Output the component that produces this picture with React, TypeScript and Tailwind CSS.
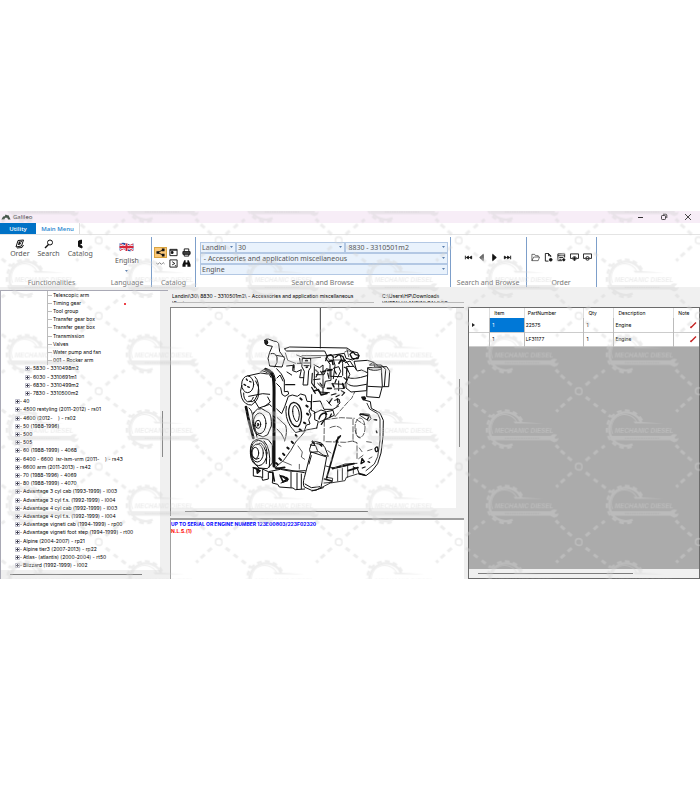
import type { ReactNode } from "react";

interface TreeItem {
  label: string;
  level: 1 | 2 | 3;
}

interface Part {
  item: string;
  partNumber: string;
  qty: string;
  description: string;
}

const leaf = (label: string): TreeItem => ({ label, level: 3 });
const model = (label: string): TreeItem => ({ label, level: 2 });
const series = (label: string): TreeItem => ({ label, level: 1 });

const tree: TreeItem[] = [
  leaf("Telescopic arm"),
  leaf("Timing gear"),
  leaf("Tool group"),
  leaf("Transfer gear box"),
  leaf("Transfer gear box"),
  leaf("Transmission"),
  leaf("Valves"),
  leaf("Water pump and fan"),
  leaf("001 - Rocker arm"),
  model("5830 - 3310498m2"),
  model("6030 - 3310691m1"),
  model("6830 - 3310499m2"),
  model("7830 - 3310500m2"),
  series("40"),
  series("4500 restyling (2011-2012) - rs01"),
  series("4600 (2012-    ) - rs02"),
  series("50 (1988-1996)"),
  series("500"),
  series("505"),
  series("60 (1988-1999) - 4068"),
  series("6400 - 6600  isr-ism-vrm (2011-    ) - rs43"),
  series("6600 arm (2011-2013) - rs42"),
  series("70 (1988-1996) - 4069"),
  series("80 (1988-1999) - 4070"),
  series("Advantage 3 cyl cab (1993-1999) - l003"),
  series("Advantage 3 cyl f.s. (1992-1999) - l004"),
  series("Advantage 4 cyl cab (1992-1999) - l003"),
  series("Advantage 4 cyl f.s. (1992-1999) - l004"),
  series("Advantage vigneti cab (1994-1999) - rp00"),
  series("Advantage vigneti foot step (1994-1999) - rt00"),
  series("Alpine (2004-2007) - rp21"),
  series("Alpine tier3 (2007-2013) - rp22"),
  series("Atlas- (atlantis) (2000-2004) - rt50"),
  series("Blizzard (1992-1999) - l002"),
];

const parts: Part[] = [
  { item: "1", partNumber: "22575", qty: "1", description: "Engine" },
  { item: "1", partNumber: "LF31177", qty: "1", description: "Engine" },
];

function Watermark() {
  return (
    <svg className="pointer-events-none absolute inset-0 h-full w-full opacity-40" aria-hidden="true">
      <defs>
        <pattern id="mark" width="120" height="75.4" patternUnits="userSpaceOnUse" patternTransform="translate(-21.3 29.4)">
          <g fill="none" stroke="#d4d4d4" strokeWidth="1.6">
            <path d="M0 3.3H1.5Q3.3 3.3 3.3 0M116.7 0Q116.7 3.3 120 3.3M0 72.1Q3.3 72.1 3.3 75.4M116.7 75.4Q116.7 72.1 120 72.1" />
          </g>
          <g fill="none" stroke="#d4d4d4" strokeWidth="3">
            <path d="M7 6l4 3M15 12.5l4 3M23 18.5l4 3M30 24l2 1.5" />
            <path d="M113 6l-4 3.5M106 12.5l-4 3.5M99.500 18.500l-2 2" />
            <path d="M7 69.400l4 -3.500M15 62.900l4 -3.500M23 56.900l3 -2.500" />
            <path d="M113 69.400l-4 -3.500M106 62.900l-4 -3.500M100 56.900l-3 -3" />
          </g>
          <g transform="translate(1.300 -20.800) scale(.3333)">
            <path d="M184 157A50 50 0 1 0 158 222" fill="none" stroke="#d4d4d4" strokeWidth="7" />
            <path d="M186 150A56 56 0 1 0 160 227" fill="none" stroke="#d4d4d4" strokeWidth="7" strokeDasharray="14 10" />
            <path d="M170 155A40 40 0 0 0 98 190" fill="none" stroke="#d4d4d4" strokeWidth="3" />
            <path d="M160 153L252 159H165ZM92 196H272Q277 188 292 193L284 201L286 205L296 203Q294 214 282 216L270 210H92Z" fill="#d4d4d4" />
            <text x="104" y="186" fontSize="19" fontWeight="700" fontStyle="italic" fill="#d4d4d4" fontFamily="'Liberation Sans', sans-serif">
              MECHANIC DIESEL
            </text>
            <path d="M134 203H240" stroke="#b8b8b8" strokeWidth="3" strokeDasharray="5 2" />
          </g>
        </pattern>
      </defs>
      <rect width="100%" height="100%" fill="url(#mark)" />
    </svg>
  );
}

function TitleBar() {
  return (
    <header className="flex h-3 items-center bg-[#f7edf7] pl-px text-[#333]">
      <svg viewBox="0 0 24 16" className="h-2 w-2.5" fill="#47564b">
        <path d="M1 14L5 7L9 6L11 2L15 4L18 4L23 14L17 14L15 10L10 10L8 14Z" />
      </svg>
      <h1 className="ml-0.5 text-[6px] leading-3">Galileo</h1>
      <div className="ml-auto flex items-center gap-4 pr-2">
        <button aria-label="Minimize" className="h-2 w-2">
          <svg viewBox="0 0 8 8" className="h-2 w-2" fill="none" stroke="#333">
            <path d="M2 4.500H7" />
          </svg>
        </button>
        <button aria-label="Restore" className="h-2 w-2">
          <svg viewBox="0 0 8 8" className="h-2 w-2" fill="none" stroke="#333" strokeWidth=".9">
            <rect x="1.500" y="2.500" width="4" height="4" rx=".8" />
            <path d="M3 1.200H5.800Q6.800 1.200 6.800 2.200V5" />
          </svg>
        </button>
        <button aria-label="Close" className="h-2 w-2">
          <svg viewBox="0 0 8 8" className="h-2 w-2" fill="none" stroke="#333" strokeWidth=".9">
            <path d="M1 1L7 7M7 1L1 7" />
          </svg>
        </button>
      </div>
    </header>
  );
}

function RibbonGroup({ label, className, children }: { label: string; className: string; children: ReactNode }) {
  return (
    <section className={`flex flex-col ${className}`}>
      <div className="flex-1">{children}</div>
      <p className="text-center text-[7px] leading-2 whitespace-nowrap text-[#777]">{label}</p>
    </section>
  );
}

function ToolButton({ label, children }: { label: string; children: ReactNode }) {
  return (
    <button className="flex flex-col items-center">
      <svg viewBox="0 0 20 20" className="h-2.5 w-2.5" fill="none" stroke="#111" strokeWidth="2">
        {children}
      </svg>
      <span className="text-[7px] leading-2.5 text-[#555]">{label}</span>
    </button>
  );
}

function IconButton({ label, active = false, children }: { label: string; active?: boolean; children: ReactNode }) {
  return (
    <button
      aria-label={label}
      className={`flex h-[11px] w-[13px] items-center justify-center ${active ? "border border-[#d9a441] bg-[#fbc878]" : ""}`}
    >
      <svg viewBox="0 0 20 20" className="h-[9px] w-[9px]" fill="none" stroke="#111" strokeWidth="2">
        {children}
      </svg>
    </button>
  );
}

function Combo({ label, value, className }: { label: string; value: string; className: string }) {
  return (
    <div className={`relative h-[11px] border border-[#b3c8e4] bg-[#e9f2fc] ${className}`}>
      <select
        aria-label={label}
        className="block h-[9px] w-full appearance-none bg-transparent pl-px text-[7px] leading-[9px] text-[#555] outline-none"
      >
        <option>{value}</option>
      </select>
      <svg viewBox="0 0 6 4" className="absolute top-[3px] right-0.5 h-0.5 w-[3px]" fill="#5b7fae">
        <path d="M0 0H6L3 4Z" />
      </svg>
    </div>
  );
}

function Ribbon() {
  return (
    <div className="bg-white">
      <nav className="flex h-3 items-stretch border-b border-[#e4e4e4] font-['Open_Sans','Noto_Sans',sans-serif] text-[6px] leading-3">
        <button className="w-9 bg-[#0072c6] font-semibold text-white">Utility</button>
        <button className="w-11 border-r border-[#ddd] font-semibold text-[#2a86cf]">Main Menu</button>
      </nav>
      <div className="flex h-[52px] divide-x divide-[#7d9fca] pt-0.5">
        <div className="flex">
          <RibbonGroup label="Functionalities" className="w-[103px]">
            <div className="flex justify-center gap-2 pt-0.5">
              <ToolButton label="Order">
                <path d="M6 3L17 2L13 14L2 16ZM8 7L14 5M6 11L12 9M4 18L14 17L17 12" />
                <path d="M9 5L8 11" strokeWidth="3" />
              </ToolButton>
              <ToolButton label="Search">
                <circle cx="12" cy="7" r="5" />
                <path d="M9 11L2 18" strokeWidth="3" />
              </ToolButton>
              <ToolButton label="Catalog">
                <path d="M7 4L13 2V9L8 11L14 14V18L7 15Z" fill="#111" />
              </ToolButton>
            </div>
          </RibbonGroup>
          <RibbonGroup label="Language" className="w-12">
            <button className="mx-auto flex flex-col items-center pt-[5px]">
              <svg viewBox="0 0 30 20" className="h-[10px] w-[15px]">
                <path d="M1 3Q8 0 15 3T29 3V17Q22 20 15 17T1 17Z" fill="#294a9d" />
                <path d="M2 4L28 17M28 4L2 17" stroke="#fff" strokeWidth="4" />
                <path d="M2 4L28 17M28 4L2 17" stroke="#d5273b" strokeWidth="2" />
                <path d="M15 3V18M1 10H29" stroke="#fff" strokeWidth="6" />
                <path d="M15 3V18M1 10H29" stroke="#d5273b" strokeWidth="4" />
              </svg>
              <span className="pt-1 text-[7px] leading-2.5 text-[#555]">English</span>
              <svg viewBox="0 0 6 4" className="mt-1 h-0.5 w-[3px]" fill="#5b7fae">
                <path d="M0 0H6L3 4Z" />
              </svg>
            </button>
          </RibbonGroup>
        </div>
        <RibbonGroup label="Catalog" className="w-11">
          <div className="grid grid-cols-3 px-0.5 pt-[10px]">
            <IconButton label="Tree view" active>
              <path d="M4 10L16 4M4 10L16 16" />
              <path d="M1 7H7V13H1ZM13 1H19V7H13ZM13 13H19V19H13Z" fill="#111" stroke="none" />
            </IconButton>
            <IconButton label="Window">
              <path d="M2 3H18V17H2ZM2 5H18" />
              <path d="M5 8H9V12H5Z" fill="#111" />
            </IconButton>
            <IconButton label="Print">
              <path d="M5 8V2H15V8M5 13V18H15V13" />
              <path d="M2 8H18V14H2Z" fill="#444" />
            </IconButton>
            <IconButton label="Compare">
              <path d="M0 8L4 12L8 8L12 12L16 8L19 11" stroke="#777" strokeWidth="2" />
            </IconButton>
            <IconButton label="Preview">
              <path d="M2 2H18V18H2ZM7 6L13 10L7 13" />
              <path d="M13 15H16" />
            </IconButton>
            <IconButton label="Find">
              <path d="M5 3H8V8H12V3H15L19 12V17H12V12H8V17H1V12Z" fill="#111" stroke="none" />
            </IconButton>
          </div>
        </RibbonGroup>
        <RibbonGroup label="Search and Browse" className="min-w-0 flex-[255]">
          <div className="flex flex-col pt-[5px] pr-0.5 pl-1">
            <div className="flex">
              <Combo label="Brand" value="Landini" className="w-9" />
              <Combo label="Series" value="30" className="flex-1" />
              <Combo label="Model" value={"\u00a08830 - 3310501m2"} className="w-[103px]" />
            </div>
            <Combo label="Group" value={"\u00a0- Accessories and application miscellaneous"} className="w-full" />
            <Combo label="Table" value="Engine" className="w-full" />
          </div>
        </RibbonGroup>
        <RibbonGroup label="Search and Browse" className="w-[76px]">
          <div className="flex justify-center pt-[15px]">
            <IconButton label="First">
              <path d="M3 6V14M10 7L5 10L10 13ZM17 7L12 10L17 13Z" fill="#111" />
            </IconButton>
            <IconButton label="Previous">
              <path d="M14 3L6 10L14 17Z" fill="#777" stroke="#555" />
            </IconButton>
            <IconButton label="Next">
              <path d="M6 3L14 10L6 17Z" fill="#111" />
            </IconButton>
            <IconButton label="Last">
              <path d="M17 6V14M10 7L15 10L10 13ZM3 7L8 10L3 13Z" fill="#111" />
            </IconButton>
          </div>
        </RibbonGroup>
        <RibbonGroup label="Order" className="w-[70px]">
          <div className="flex justify-center pt-[15px]">
            <IconButton label="Open order">
              <path d="M2 17V3H8L10 6H16V9M2 17L6 9H19L16 17Z" strokeWidth="1.300" />
            </IconButton>
            <IconButton label="New order">
              <path d="M10 18H3V1H10L15 6V9M10 1V6H15" />
              <circle cx="15" cy="15" r="3" fill="#111" />
            </IconButton>
            <IconButton label="Edit list">
              <path d="M11 17H2V2H17V10M2 6H17M5 10H14M5 14H10" />
              <circle cx="15" cy="15" r="2.500" fill="#111" />
            </IconButton>
            <IconButton label="Add to order">
              <path d="M5 12H1V2H19V12H15M6 12H14" />
              <circle cx="10" cy="12" r="4" />
              <path d="M10 9V17" />
            </IconButton>
            <IconButton label="Remove from order">
              <path d="M5 12H1V2H19V12H15M6 12H14" />
              <circle cx="10" cy="12" r="4" />
            </IconButton>
          </div>
        </RibbonGroup>
        <div className="flex-[104]" />
      </div>
    </div>
  );
}

function TreeRow({ item }: { item: TreeItem }) {
  if (item.level === 3) {
    return (
      <li className="ml-[46px] flex flex-1 items-center border-l border-[#bbb]">
        <span className="mr-px w-1 border-t border-[#bbb]" />
        <span className="leading-none whitespace-pre">{item.label}</span>
      </li>
    );
  }
  return (
    <li className={`flex flex-1 items-center ${item.level === 2 ? "ml-6" : "ml-3.5"}`}>
      <button aria-label={`Expand ${item.label}`} className="h-[5px] w-[5px]">
        <svg viewBox="0 0 10 10" className="block h-[5px] w-[5px]" fill="#fff">
          <path d="M1 1H9V9H1Z" stroke="#aab" strokeWidth="1.500" />
          <path d="M2 5H8M5 2V8" stroke="#445" strokeWidth="2" />
        </svg>
      </button>
      <span className="mr-px w-0.5 border-t border-[#bbb]" />
      <span className="leading-none whitespace-pre">{item.label}</span>
    </li>
  );
}

function TreePanel() {
  return (
    <aside className="flex flex-col border-t border-l border-[#a9a9b5] bg-[#f0f0f0]">
      <div className="flex flex-1">
        <ul className="relative flex min-w-0 flex-1 flex-col overflow-hidden bg-white text-[5px] text-black">
          {tree.map((item, i) => (
            <TreeRow key={i} item={item} />
          ))}
          <li aria-hidden="true" className="absolute top-3 left-[123px] h-0.5 w-0.5 rounded-full bg-red-600" />
        </ul>
        <div className="w-2 pt-[120px] pl-0.5">
          <div className="h-[46px] w-px bg-[#8a8a8a]" />
        </div>
      </div>
      <div className="h-[9px] pt-1 pl-[9px]">
        <div className="h-px w-10/12 bg-[#7f7f7f]" />
      </div>
    </aside>
  );
}

// Line drawing of the engine assembly shown for the selected table
function EngineDrawing() {
  return (
    <svg viewBox="0 0 492 498" className="h-[166px] w-[164px]" role="img" aria-label="Engine" fill="none" stroke="#111" strokeWidth="3" strokeLinecap="round" strokeLinejoin="round">
      <path d="M265 -80V42" strokeWidth="2.500" />
      {/* rocker cover and thermostat */}
      <path d="M98 19Q97 31 105 34L121 37L113 55L108 73L113 96L150 99L158 73L143 53L140 29Q137 21 125 21L109 15Q100 14 98 19Z" fill="#fff" />
      <ellipse cx="103" cy="25" rx="4" ry="7" fill="#222" />
      <path d="M117 59Q129 55 135 69Q139 85 128 99M132 64L156 68M158 44L173 39L345 42L361 53L377 56L381 67L362 78L342 73L337 58L285 66L278 51L165 51Z" />
      <path d="M160 57L167 79L191 88M345 46L350 68M338 54Q351 45 362 57M210 65H286M284 67L292 78H338M194 63L222 74L266 70" strokeWidth="2" />
      {/* injector lines and head */}
      <path d="M212 73H236V100L230 110L227 153H213L217 112L210 99ZM215 87H235M216 95H231M246 92L263 101L273 93V180M281 72L294 91V127M303 72L309 94L304 134M324 63L332 88V124M338 76L351 94L343 117" />
      <path d="M247 98V155L262 174L292 176M253 122H276L283 104L297 108V139L280 142L276 161M297 127L329 128M300 149L335 151L337 163L307 165M257 148L273 163M304 103L320 98L326 112L317 130M245 137L264 135M320 141V170" />
      <path d="M251 108L259 116L252 129M266 112L271 121M241 118L239 147L249 161M287 117L291 133M308 110L313 120M337 100L346 104M336 131L345 139L339 150M313 136L309 146M264 147L270 155M239 160L250 178M298 183L312 179M328 170L338 176L330 184M312 188L322 183" strokeWidth="3.500" />
      <path d="M281 80L286 65L297 62L305 70M310 70L320 62L333 68L338 81M354 61L362 52L370 62L381 64L378 74L361 74Z" strokeWidth="4" />
      <path d="M291 82L301 80L303 91M321 88L327 79L336 82M221 80L226 80M223 100L226 99M272 113L281 110M287 110L300 107M301 149L306 159M332 149L336 162M286 163L298 163M246 171L259 167L268 183L285 178" strokeWidth="5" />
      <path d="M164 96L183 94L182 110L193 114L208 107L203 131L215 131M165 114L179 123M196 88H209M186 94V108M203 73L205 88" />
      <path d="M161 152H188M185 92V101" strokeWidth="4" />
      {/* fan pulley, belt and alternator */}
      <path d="M46 126L86 117L106 120M50 187L92 179L113 181M69 128Q84 143 78 178L69 197Q62 207 51 202" />
      <ellipse cx="47" cy="151" rx="18" ry="25" fill="#fff" />
      <path d="M43 135L46 139M36 151L41 154M47 158L52 160M53 142L57 144" strokeWidth="4" />
      <path d="M29 154Q22 171 29 191Q38 214 59 213L73 200Q84 183 79 158L71 141M35 177Q34 196 46 203Q58 206 64 190" />
      <path d="M86 113Q101 99 117 110Q128 118 130 140M92 111Q110 113 117 130" />
      <path d="M101 106Q119 112 124 132Q127 150 126 200V396" strokeWidth="9" />
      <path d="M42 219L50 257L64 312" strokeWidth="8" />
      <path d="M51 222Q61 229 62 249L75 310M67 199L81 222L113 211L118 217M107 189L115 204L98 217" />
      <path d="M66 235Q75 221 89 224L112 237Q119 247 118 276L107 302L93 309L73 300Q61 283 61 257Q61 240 66 235Z" />
      <ellipse cx="83" cy="268" rx="19" ry="31" />
      <ellipse cx="78" cy="271" rx="8" ry="12" />
      <ellipse cx="78" cy="272" rx="2" ry="5" />
      <path d="M63 323Q81 307 109 317L121 333V387L106 404L81 402Q58 382 55 352Q55 331 63 323Z" fill="#fff" />
      <ellipse cx="80" cy="357" rx="25" ry="38" />
      <ellipse cx="76" cy="357" rx="18" ry="27" />
      <ellipse cx="70" cy="357" rx="10" ry="17" />
      <path d="M86 327Q109 346 103 389M96 321Q118 342 112 399M75 332L83 328M60 365L71 376L81 373" />
      {/* timing case */}
      <path d="M134 104Q151 119 157 138V173L168 172L170 180L159 187L150 181L146 161L134 149M135 132L144 123L153 141M134 225L149 239L158 218L169 187L181 183L196 187L206 180L220 184L225 202L237 203L238 219L231 231L237 243L230 257L234 270L223 273L217 291L206 291L191 296L176 278Q157 249 163 217" />
      <path d="M170 241Q168 208 185 205Q204 207 208 235Q211 266 198 278Q177 280 170 241Z" strokeWidth="4" fill="#fff" />
      <path d="M182 232Q182 213 190 215Q201 222 202 244Q201 262 194 264Q183 254 182 232Z" />
      <path d="M205 193L209 197M223 215L227 218M225 239L229 242M216 266L220 268M203 286L207 289M191 303L194 307M179 323L183 327M166 341L170 344M153 359L157 363M142 373L147 378M132 387L137 391" strokeWidth="6" />
      <path d="M129 401L155 379L176 350L191 324L210 303L222 288L255 282M136 251L161 274Q167 294 158 321M135 285Q151 298 157 316" strokeWidth="2.500" />
      {/* block side */}
      <path d="M239 182L238 229L248 233V257L259 262L254 282M243 203L265 201L276 226H303L320 216M246 238L267 228L284 233L303 229L307 244L280 256L263 264M285 200L297 214M308 199L321 195L324 207L314 216" />
      <path d="M261 255Q265 238 279 237Q287 246 276 259L268 271M300 194L291 207M316 194L318 206M298 240L294 249M281 235L284 241" strokeWidth="4" />
      <path d="M309 248L345 207L359 193L369 172L394 162M278 257L326 251L367 253M277 261L276 321M282 323L340 325L368 320M363 256V322L375 326V378M294 281Q315 271 328 284M374 257L398 273M372 284Q370 311 384 312" strokeDasharray="16 6" strokeWidth="2" />
      <ellipse cx="384" cy="281" rx="15" ry="29" strokeDasharray="12 5" strokeWidth="2" />
      {/* fuel filters */}
      <path d="M344 98L366 97L376 111L389 108L408 117L404 170L357 174L342 162V146L353 122Z" fill="#fff" />
      <path d="M344 104V147Q355 158 375 156L403 151M347 130Q362 139 405 125M340 86L354 81L365 98M373 107L366 82L406 79L425 85L428 99L464 98L473 111L470 158H450" />
      <path d="M408 101L448 101L451 157L442 191L404 188L407 120Z" fill="#fff" />
      <path d="M408 104Q422 113 447 106M408 157L449 159M413 93L448 93L461 106L457 157M414 91L424 85L436 93" />
      <path d="M390 190L398 189L400 194L394 197Z" fill="#111" strokeWidth="5" />
      {/* flywheel housing */}
      <path d="M397 198L415 203L418 223L444 237L454 259L453 307L447 357L437 389L420 411L402 425L382 420L376 404L366 400" />
      <path d="M405 208L413 225L437 239L444 255L444 321L437 368L427 390L402 410M383 242L393 239L412 241L417 254L410 261L388 247Z" strokeWidth="2.500" />
      <path d="M385 240L412 246L406 257M426 257L434 258M433 291L435 296M429 344Q437 331 438 349Q431 359 429 344ZM408 383L413 385M390 373L397 383L387 389ZM391 402L399 399" strokeWidth="4" />
      <path d="M404 323L418 325M407 350L420 346M420 369L411 374M393 364L380 374M382 342L390 353" strokeWidth="2" />
      {/* sump and oil filter */}
      <path d="M64 400V426L89 429L92 439L109 435V415L123 416L121 447L137 451L142 459L183 462L190 467L218 465M63 401L89 404L109 413L145 406L178 412L220 410M129 401L217 416M177 415V460M195 417V466M208 420V464M143 423L168 440L147 447M92 407V431" />
      <path d="M75 407L84 410L76 417ZM145 426Q160 426 164 437L153 443ZM122 415L127 441M67 402L79 407M132 404L158 400M164 431L168 436" strokeWidth="5" />
      <path d="M238 354L284 369L267 460Q252 473 239 469L217 459Q211 450 217 431Z" fill="#fff" />
      <path d="M233 345L238 330L248 322L268 327L279 341L289 367L273 363L260 353L236 355ZM235 333L251 335L256 349M254 329L273 332M242 320L249 328M238 365L231 390M219 450L238 461L263 458M240 471L274 461" />
      <path d="M241 323L247 330M264 331L269 336" strokeWidth="5" />
      <path d="M319 309L284 432M313 321L325 306" strokeWidth="5" />
      <path d="M281 396L305 402L339 390L375 388M268 461L295 447L339 440L343 430L376 420M284 430L302 433L300 445L276 447M302 405L341 395M317 407V441M331 402V438M347 396V430M364 397V418" strokeWidth="2.500" />
      <path d="M301 403L366 389M277 435L299 441M348 410L378 401M381 419L398 423" strokeWidth="5" />
      <path d="M198 336L211 354L208 369L218 376M202 391V405M152 382L178 393M287 350L297 357M319 333L327 337" strokeWidth="2" />
    </svg>
  );
}

function DrawingPanel() {
  return (
    <main className="flex min-w-0 flex-col px-0.5">
      <div className="mt-[6px] flex h-2.5 gap-2 overflow-hidden text-[5px] leading-[7px] text-black">
        <p className="ml-0.5 min-w-0 flex-1 overflow-hidden border-b border-[#bbb]">
          Landini\30\ 8830 - 3310501m2\ - Accessories and application miscellaneous
          <br />
          \Engine
        </p>
        <p className="w-[82px] overflow-hidden border-b border-[#bbb]">
          C:\Users\HP\Downloads
          <br />
          \INSTALL\LANDINI GALILEO
        </p>
      </div>
      <div className="mt-1 flex flex-1 flex-col border-t border-l border-[#858585] bg-[#f0f0f0]">
        <div className="flex flex-1">
          <div className="flex-1 overflow-hidden bg-white pt-[26px] pl-[61px]">
            <div className="[&>svg]:overflow-visible">
              <EngineDrawing />
            </div>
          </div>
          <div className="w-2 pt-[71px] pl-[3px]">
            <div className="h-[68px] w-px bg-[#8a8a8a]" />
          </div>
        </div>
        <div className="h-2 pt-[3px] pl-3.5">
          <div className="h-px w-[183px] bg-[#7f7f7f]" />
        </div>
      </div>
      <div className="mt-0.5 h-[61px] border-t-2 border-l border-[#a0a0a0] bg-white pt-px text-[5px] leading-[7px] font-bold">
        <p className="text-[#0000ff]">UP TO SERIAL OR ENGINE NUMBER 123E00803/223F02320</p>
        <p className="text-[#ff0000]">N.L.S.(1)</p>
      </div>
    </main>
  );
}

function PartsPanel() {
  return (
    <section className="mt-5 flex flex-col border border-[#6b6b6b] bg-[#ababab]">
      <table className="w-full table-fixed border-collapse bg-white text-left text-[5px] text-black">
        <colgroup>
          <col className="w-[9%]" />
          <col className="w-[15%]" />
          <col className="w-[26%]" />
          <col className="w-[13%]" />
          <col className="w-[26%]" />
          <col className="w-[11%]" />
        </colgroup>
        <thead>
          <tr className="h-2.5 divide-x divide-[#ddd] leading-[9px]">
            <th aria-label="Selected" />
            <th className="pl-1 font-normal">Item</th>
            <th className="pl-[3px] font-normal">PartNumber</th>
            <th className="pl-1 font-normal">Qty</th>
            <th className="pl-1 font-normal">Description</th>
            <th className="pl-1 font-normal">Note</th>
          </tr>
        </thead>
        <tbody>
          {parts.map((part, i) => (
            <tr key={part.partNumber} className="h-[14px] divide-x divide-[#bbb] border-b border-[#ccc] leading-3">
              <td>
                {i === 0 && (
                  <svg viewBox="0 0 6 8" className="ml-[3px] h-1 w-[3px]" fill="#222">
                    <path d="M0 0L6 4L0 8Z" />
                  </svg>
                )}
              </td>
              <td className={`pl-0.5 ${i === 0 ? "bg-[#0078d7] text-white" : ""}`}>{part.item}</td>
              <td className="pl-px">{part.partNumber}</td>
              <td className="pl-0.5">{part.qty}</td>
              <td className="pl-px">{part.description}</td>
              <td>
                <button aria-label={`Edit note ${part.partNumber}`} className="ml-auto block h-2 w-2.5">
                  <svg viewBox="0 0 20 16" className="block h-2 w-2.5" fill="none" stroke="#c62828" strokeWidth="3">
                    <path d="M4 13L14 3M3 14L5 11" />
                  </svg>
                </button>
              </td>
            </tr>
          ))}
        </tbody>
      </table>
      <div className="mt-auto h-[9px] bg-[#f0f0f0] pt-1 pl-[9px]">
        <div className="h-px w-[70%] bg-[#7f7f7f]" />
      </div>
    </section>
  );
}

export default function App() {
  return (
    <div className="min-h-screen bg-white pt-[211px] font-['Noto_Sans','Open_Sans',sans-serif]">
      <div className="relative overflow-hidden">
        <TitleBar />
        <Ribbon />
        <div className="grid min-h-[292px] grid-cols-[168fr_298fr_234fr] bg-[#f0f0f0] font-['Inter','Liberation_Sans',sans-serif]">
          <div className="flex flex-col pt-[3px] [&>aside]:flex-1">
            <TreePanel />
          </div>
          <DrawingPanel />
          <div className="flex flex-col pl-0.5 [&>section]:flex-1">
            <PartsPanel />
          </div>
        </div>
        <Watermark />
      </div>
    </div>
  );
}
